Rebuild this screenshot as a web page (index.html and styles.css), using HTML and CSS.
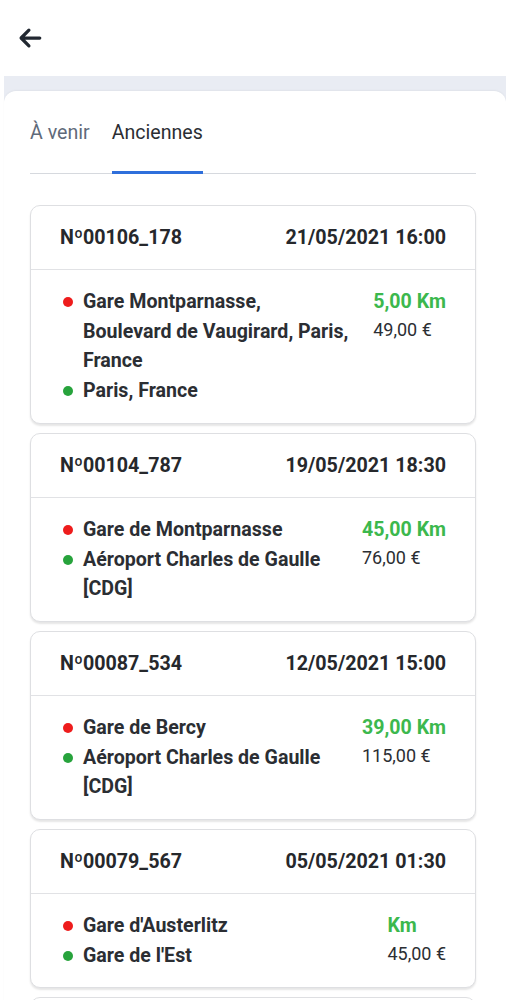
FILE: index.html
```html
<!DOCTYPE html>
<html lang="fr">
<head>
<meta charset="utf-8">
<link rel="stylesheet" href="styles.css">
</head>
<body>
<header class="topbar">
  <svg class="back" width="26" height="26" viewBox="0 0 24 24"><path d="M21 12H4M11 4.8L3.8 12l7.2 7.2" fill="none" stroke="#222831" stroke-width="3" stroke-linecap="round" stroke-linejoin="round"/></svg>
</header>
<div class="band">
  <main class="panel">
    <nav class="tabs">
      <div class="tab">À venir</div>
      <div class="tab active">Anciennes</div>
    </nav>
    <div class="list">
      <article class="card">
        <div class="card-head"><span>Nº00106_178</span><span>21/05/2021 16:00</span></div>
        <div class="card-body">
          <div class="stops">
            <div class="stop"><span class="dot red"></span><span class="addr">Gare Montparnasse, Boulevard de Vaugirard, Paris, France</span></div>
            <div class="stop"><span class="dot green"></span><span class="addr">Paris, France</span></div>
          </div>
          <div class="meta"><div class="km">5,00 Km</div><div class="price">49,00 €</div></div>
        </div>
      </article>
      <article class="card">
        <div class="card-head"><span>Nº00104_787</span><span>19/05/2021 18:30</span></div>
        <div class="card-body">
          <div class="stops">
            <div class="stop"><span class="dot red"></span><span class="addr">Gare de Montparnasse</span></div>
            <div class="stop"><span class="dot green"></span><span class="addr">Aéroport Charles de Gaulle [CDG]</span></div>
          </div>
          <div class="meta"><div class="km">45,00 Km</div><div class="price">76,00 €</div></div>
        </div>
      </article>
      <article class="card">
        <div class="card-head"><span>Nº00087_534</span><span>12/05/2021 15:00</span></div>
        <div class="card-body">
          <div class="stops">
            <div class="stop"><span class="dot red"></span><span class="addr">Gare de Bercy</span></div>
            <div class="stop"><span class="dot green"></span><span class="addr">Aéroport Charles de Gaulle [CDG]</span></div>
          </div>
          <div class="meta"><div class="km">39,00 Km</div><div class="price">115,00 €</div></div>
        </div>
      </article>
      <article class="card">
        <div class="card-head"><span>Nº00079_567</span><span>05/05/2021 01:30</span></div>
        <div class="card-body">
          <div class="stops">
            <div class="stop"><span class="dot red"></span><span class="addr">Gare d'Austerlitz</span></div>
            <div class="stop"><span class="dot green"></span><span class="addr">Gare de l'Est</span></div>
          </div>
          <div class="meta"><div class="km">Km</div><div class="price">45,00 €</div></div>
        </div>
      </article>
      <article class="card card-stub"></article>
    </div>
  </main>
</div>
</body>
</html>
```
FILE: styles.css
```css
html, body {
  margin: 0;
  padding: 0;
  background: #ffffff;
}
body {
  font-family: Roboto, "Liberation Sans", Arial, sans-serif;
  color: #2b2e33;
  height: 1000px;
  overflow: hidden;
}
.topbar {
  height: 76px;
  display: flex;
  align-items: flex-start;
  padding: 25px 0 0 17px;
  box-sizing: border-box;
}
.back {
  display: block;
}
.band {
  margin-left: 4px;
  background: #e9ecf3;
  padding-top: 15px;
}
.panel {
  background: #ffffff;
  border-radius: 12px 12px 0 0;
  padding: 0 30px 0 26px;
  box-shadow: 0 -1px 2px rgba(0,0,0,0.04);
}
.tabs {
  display: flex;
  gap: 22px;
  border-bottom: 1px solid #d6d9de;
}
.tab {
  font-size: 19.6px;
  line-height: 24px;
  padding: 30px 0 26px;
  color: #5f6a7a;
  border-bottom: 3px solid transparent;
  margin-bottom: -1px;
}
.tab.active {
  color: #2b2e33;
  border-bottom-color: #2f6fdb;
}
.list {
  display: flex;
  flex-direction: column;
  gap: 9px;
  padding-top: 31px;
}
.card {
  border: 1px solid #dedfe2;
  border-radius: 10px;
  box-shadow: 0 2px 2px rgba(0,0,0,0.10);
  background: #fff;
}
.card-stub {
  height: 60px;
}
.card-head {
  height: 63px;
  display: flex;
  justify-content: space-between;
  align-items: center;
  padding: 0 29px;
  border-bottom: 1px solid #e1e2e5;
  font-weight: 700;
  font-size: 19.7px;
  color: #26282c;
}
.card-body {
  display: flex;
  justify-content: space-between;
  gap: 20px;
  padding: 17px 29px 17px;
}
.stops {
  flex: 1;
}
.stop {
  display: flex;
  align-items: flex-start;
  font-weight: 700;
  font-size: 19.6px;
  line-height: 29.7px;
  color: #2b2e33;
}
.dot {
  flex: none;
  width: 10px;
  height: 10px;
  border-radius: 50%;
  margin: 10px 10px 0 3px;
}
.dot.red { background: #ee1c1c; }
.dot.green { background: #27a33c; }
.meta {
  flex: none;
}
.km {
  color: #3cb84d;
  font-weight: 700;
  font-size: 19.6px;
  line-height: 29.7px;
}
.price {
  font-size: 18px;
  line-height: 26px;
  color: #2b2e33;
}
```
